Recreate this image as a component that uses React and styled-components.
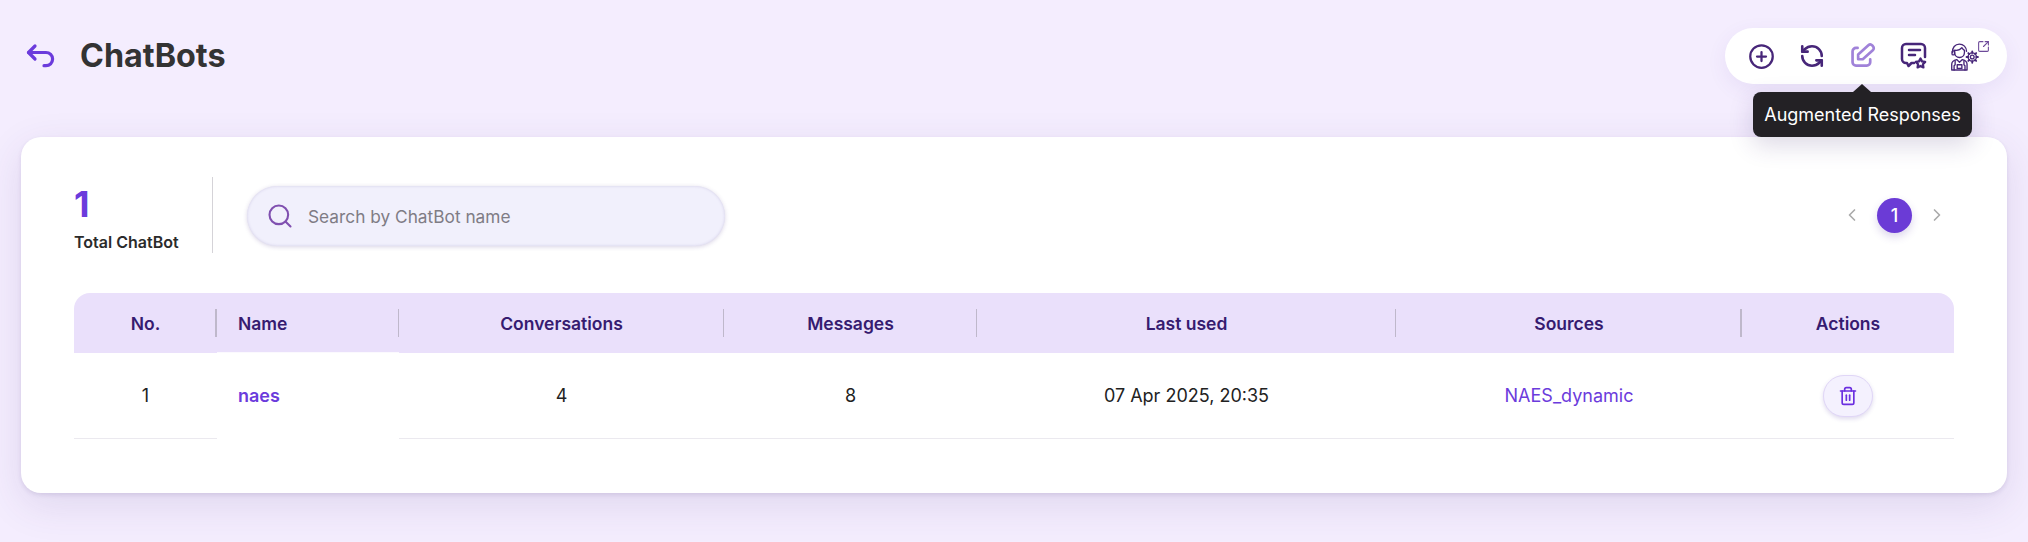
import React from "react"
import styled, { createGlobalStyle } from "styled-components"
import { CirclePlus, RefreshCcw, SquareArrowOutUpRight, Search, ChevronLeft, ChevronRight, Trash2 } from "lucide-react"

const GlobalStyle = createGlobalStyle`
  html, body { margin: 0; padding: 0; }
  body { background: #f4edfe; font-family: "Inter", "Noto Sans", sans-serif; color: #222; }
`

const Page = styled.div`
  height: 542px;
  box-sizing: border-box;
  padding: 28px 21px 0 21px;
  overflow: hidden;
`

const TopBar = styled.header`
  display: flex;
  justify-content: space-between;
  align-items: center;
  height: 56px;
  margin-bottom: 53px;
`

const TitleGroup = styled.div`
  display: flex;
  align-items: center;
  gap: 23px;
  padding-left: 4px;
  color: #6b3bdc;
`

const Title = styled.h1`
  margin: 0;
  font-size: 32.3px;
  font-weight: 700;
  line-height: 40px;
  color: #333;
`

const ToolPill = styled.div`
  position: relative;
  display: flex;
  align-items: center;
  gap: 15px;
  width: 282px;
  height: 56px;
  box-sizing: border-box;
  padding: 0 0 0 18px;
  background: #fff;
  border-radius: 28px;
  box-shadow: 0 6px 20px rgba(90, 60, 160, 0.08);
`

const ToolButton = styled.span`
  position: relative;
  display: flex;
  align-items: center;
  justify-content: center;
  width: 36px;
  height: 36px;
  color: ${(p) => (p.$active ? "#a082d9" : "#472679")};
`

const ExternalMark = styled.span`
  position: absolute;
  top: 2px;
  right: -7px;
  display: flex;
  color: #6d4a99;
`

const Tooltip = styled.div`
  position: absolute;
  top: 64px;
  left: 28px;
  width: 219px;
  height: 45px;
  display: flex;
  align-items: center;
  justify-content: center;
  background: #232125;
  color: #fff;
  font-size: 18px;
  border-radius: 8px;
  white-space: nowrap;
  box-shadow: 0 8px 24px rgba(60, 40, 110, 0.18);

  &::before {
    content: "";
    position: absolute;
    top: -8px;
    left: 100px;
    border-left: 9px solid transparent;
    border-right: 9px solid transparent;
    border-bottom: 8px solid #232125;
  }
`

const Card = styled.main`
  height: 356px;
  box-sizing: border-box;
  padding: 40px 53px 0 53px;
  background: #fff;
  border-radius: 20px;
  box-shadow: 0 2px 4px rgba(70, 50, 120, 0.12), 0 12px 40px rgba(70, 50, 120, 0.12);
`

const FilterRow = styled.div`
  display: flex;
  align-items: center;
  height: 76px;
  margin-bottom: 40px;
`

const Stat = styled.div`
  width: 139px;
  height: 76px;
  box-sizing: border-box;
  border-right: 1px solid #d5d3d8;
  margin-right: 33px;
`

const StatValue = styled.div`
  font-size: 36px;
  font-weight: 700;
  line-height: 44px;
  color: #6b3bdc;
  margin-top: 5px;
`

const StatLabel = styled.div`
  font-size: 16px;
  font-weight: 600;
  line-height: 20px;
  margin-top: 6px;
  color: #2b2b2b;
`

const SearchBox = styled.label`
  display: flex;
  align-items: center;
  gap: 14px;
  width: 478px;
  height: 60px;
  margin: 2px 0 0 1px;
  box-sizing: border-box;
  padding-left: 19px;
  background: #f1f0fc;
  border-radius: 30px;
  color: #8050b0;
  box-shadow: inset 0 0 3px rgba(80, 60, 140, 0.18), 0 1px 4px rgba(80, 60, 140, 0.22);
`

const SearchInput = styled.input`
  flex: 1;
  padding: 0;
  border: 0;
  outline: 0;
  background: transparent;
  font: 400 17.3px "Inter", sans-serif;
  color: #222;

  &::placeholder { color: #7f7c85; opacity: 1; }
`

const Pager = styled.nav`
  display: flex;
  align-items: center;
  gap: 15px;
  margin-left: auto;
  margin-right: 7px;
  color: #aaa;
`

const PageDot = styled.span`
  display: flex;
  align-items: center;
  justify-content: center;
  width: 35px;
  height: 35px;
  border-radius: 50%;
  background: #6b3bd6;
  color: #fff;
  font-size: 18px;
  font-weight: 500;
  box-shadow: 0 4px 8px rgba(80, 50, 160, 0.2);
`

const Table = styled.table`
  width: 1880px;
  table-layout: fixed;
  border-collapse: separate;
  border-spacing: 0;
`

const Th = styled.th`
  position: relative;
  height: 60px;
  padding: 0;
  background: #eae0fb;
  color: #361b70;
  font-size: 17.5px;
  font-weight: 600;
  text-align: ${(p) => (p.$left ? "left" : "center")};
  padding-left: ${(p) => (p.$left ? "21px" : "0")};

  &:first-child { border-top-left-radius: 16px; }
  &:last-child { border-top-right-radius: 16px; }

  &:not(:last-child)::after {
    content: "";
    position: absolute;
    top: 16px;
    right: 0;
    width: ${(p) => (p.$thick ? "2px" : "1px")};
    height: 28px;
    background: #bfb8cb;
  }
`

const Td = styled.td`
  position: relative;
  height: 85px;
  padding: 0;
  font-size: 18px;
  text-align: ${(p) => (p.$left ? "left" : "center")};
  padding-left: ${(p) => (p.$left ? "21px" : "0")};
  border-bottom: 1px solid ${(p) => (p.$left ? "#fff" : "#ebe9ef")};
  color: #222;

  ${(p) => p.$left && `
    &::before {
      content: "";
      position: absolute;
      top: -1px;
      left: 0;
      right: 0;
      height: 1px;
      background: #fbf9fe;
    }
  `}
`

const NameLink = styled.a`
  color: #6b3bdc;
  font-weight: 600;
`

const SourceLink = styled.a`
  color: #6b3bdc;
`

const DeleteButton = styled.button`
  display: inline-flex;
  align-items: center;
  justify-content: center;
  width: 50px;
  height: 42px;
  padding: 0;
  background: #f4f1fe;
  color: #6b2fe0;
  border: 1px solid #e0d6f7;
  border-radius: 21px;
  box-shadow: 0 2px 4px rgba(80, 50, 160, 0.18);
`

const BackIcon = () => (
  <svg width="32" height="26" viewBox="0 0 32 26" fill="none" stroke="currentColor" strokeWidth="3.2" strokeLinecap="round" strokeLinejoin="round">
    <path d="M10 3L3.500 9.500 10 16" />
    <path d="M3.500 9.500H21a6.600 6.600 0 0 1 0 13.200h-2" />
  </svg>
)

const PenIcon = () => (
  <svg width="28" height="28" viewBox="0 0 26 26" fill="none" stroke="currentColor" strokeWidth="2.5" strokeLinecap="round" strokeLinejoin="round">
    <path d="M8 5.500H6.500a3.200 3.200 0 0 0-3.200 3.200v10a3.200 3.200 0 0 0 3.200 3.200h10a3.200 3.200 0 0 0 3.200-3.200v-2.500" />
    <path d="M8.500 11.500L18 3a2.600 2.600 0 0 1 3.600.2l.7.8a2.600 2.600 0 0 1-.2 3.700L12.800 16H8.500z" />
  </svg>
)

const ChatStarIcon = () => (
  <svg width="28" height="28" viewBox="0 0 28 28" fill="none" stroke="currentColor" strokeWidth="2.500" strokeLinecap="round" strokeLinejoin="round">
    <path d="M14 21H11.500L8.500 24l-1.500-3H6a4 4 0 0 1-4-4V6a4 4 0 0 1 4-4h15a4 4 0 0 1 4 4v9" />
    <path d="M9 8h11M9 13h6" />
    <path d="M20.500 16.500l1.500 2.900 3.200.5-2.300 2.300.5 3.200-2.900-1.500-2.900 1.500.5-3.200-2.300-2.300 3.200-.5z" strokeWidth="2.300" />
  </svg>
)

const AgentIcon = () => (
  <svg width="29" height="29" viewBox="0 0 28 28" fill="none" stroke="currentColor" strokeWidth="1.300" strokeLinecap="round" strokeLinejoin="round">
    <path d="M1.500 10C1 5.500 4 2 8 2s7 3 7 7" />
    <path d="M3.500 8c3 .5 5.500-.5 7-2.500.7 1.200 1.500 2 2.500 2.500v2c0 3-2.200 5-4.800 5S3.500 13 3.500 10z" />
    <rect x="1" y="8.500" width="2.400" height="4" rx="1" />
    <path d="M.7 27v-5.500c0-2.500 2-3.900 4.800-4.500l2.700 2.500L11 17c2.500.6 4.500 2 4.500 4.500V27z" />
    <path d="M4 18v4l-1 1v4M12.500 18v4l1 1v4" />
    <rect x="6" y="22" width="4.500" height="3.500" />
    <circle cx="20.500" cy="14.500" r="1.800" />
    <circle cx="20.500" cy="14.500" r="4" />
    <path d="M20.500 9v1.500M20.500 18.500V20M15 14.500h1.500M24.500 14.500H26M16.700 10.700l1 1M23.300 17.300l1 1M16.700 18.300l1-1M23.300 11.700l1-1" strokeWidth="1.800" />
  </svg>
)

const columns = [
  { label: "No.", width: 143, thick: true },
  { label: "Name", width: 182, left: true },
  { label: "Conversations", width: 325 },
  { label: "Messages", width: 253 },
  { label: "Last used", width: 419 },
  { label: "Sources", width: 346, thick: true },
  { label: "Actions", width: 212 },
]

export default function App() {
  return (
    <Page>
      <GlobalStyle />
      <TopBar>
        <TitleGroup>
          <BackIcon />
          <Title>ChatBots</Title>
        </TitleGroup>
        <ToolPill>
          <ToolButton><CirclePlus size={27} strokeWidth={2} /></ToolButton>
          <ToolButton><RefreshCcw size={26} strokeWidth={2.4} /></ToolButton>
          <ToolButton $active><PenIcon /></ToolButton>
          <ToolButton><ChatStarIcon /></ToolButton>
          <ToolButton>
            <AgentIcon />
            <ExternalMark><SquareArrowOutUpRight size={13} strokeWidth={2} /></ExternalMark>
          </ToolButton>
          <Tooltip>Augmented Responses</Tooltip>
        </ToolPill>
      </TopBar>
      <Card>
        <FilterRow>
          <Stat>
            <StatValue>1</StatValue>
            <StatLabel>Total ChatBot</StatLabel>
          </Stat>
          <SearchBox>
            <Search size={28} strokeWidth={1.8} />
            <SearchInput placeholder="Search by ChatBot name" />
          </SearchBox>
          <Pager>
            <ChevronLeft size={20} />
            <PageDot>1</PageDot>
            <ChevronRight size={20} />
          </Pager>
        </FilterRow>
        <Table>
          <colgroup>
            {columns.map((c) => <col key={c.label} width={c.width} />)}
          </colgroup>
          <thead>
            <tr>
              {columns.map((c) => (
                <Th key={c.label} $left={c.left} $thick={c.thick}>{c.label}</Th>
              ))}
            </tr>
          </thead>
          <tbody>
            <tr>
              <Td>1</Td>
              <Td $left><NameLink>naes</NameLink></Td>
              <Td>4</Td>
              <Td>8</Td>
              <Td>07 Apr 2025, 20:35</Td>
              <Td><SourceLink>NAES_dynamic</SourceLink></Td>
              <Td><DeleteButton><Trash2 size={20} strokeWidth={2} /></DeleteButton></Td>
            </tr>
          </tbody>
        </Table>
      </Card>
    </Page>
  )
}
